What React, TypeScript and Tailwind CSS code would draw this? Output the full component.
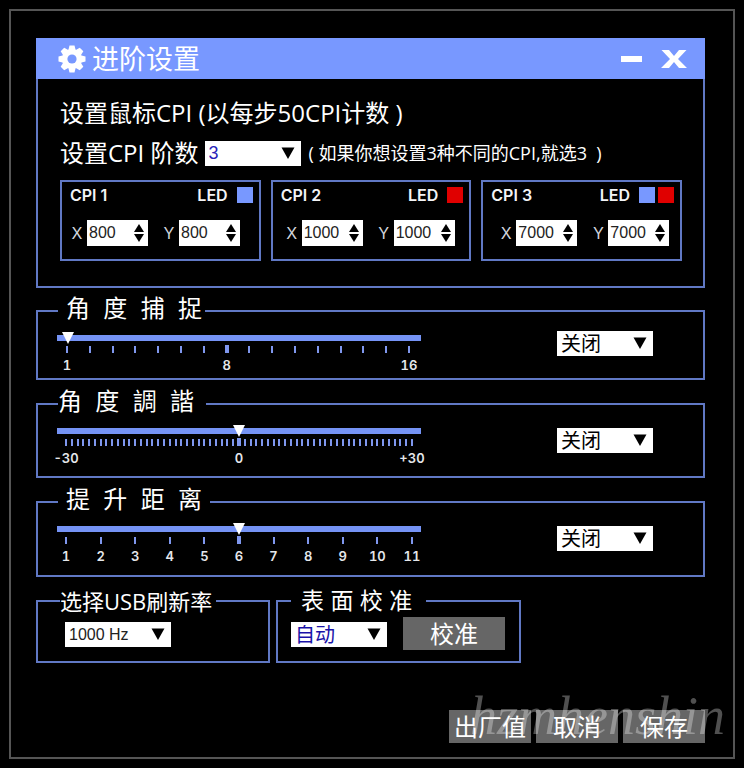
import { useState } from "react";
import { clsx } from "clsx";

const LATIN_UI = "font-['Inter','Noto_Sans_CJK_SC',sans-serif]";
const FIELD = "font-['Liberation_Sans','Noto_Sans_CJK_SC',sans-serif]";

const cpiStages = [
  { id: 1, leds: ["blue"], value: 800, pad: "pl-[9px]" },
  { id: 2, leds: ["red"], value: 1000, pad: "pl-[13px]" },
  { id: 3, leds: ["blue", "red"], value: 7000, pad: "pl-[17px]" },
];

type DropdownProps = {
  label: string;
  options: string[];
  className?: string;
};

function Dropdown({ label, options, className }: DropdownProps) {
  return (
    <div className={clsx("relative h-[25px] shrink-0 bg-white", className)}>
      <select
        aria-label={label}
        className={clsx(FIELD, "block h-full w-full appearance-none bg-transparent pl-1 leading-none outline-none")}
      >
        {options.map((option) => (
          <option key={option}>{option}</option>
        ))}
      </select>
      <svg viewBox="0 0 14 12" className="pointer-events-none absolute top-1.5 right-1.5 h-3 w-3.5">
        <path d="M0.5 0.5h13L7 12z" fill="#000" />
      </svg>
    </div>
  );
}

function AxisInput({ axis, stage, initial }: { axis: string; stage: number; initial: number }) {
  const [value, setValue] = useState(initial);
  const id = `cpi-${stage}-${axis}`;

  return (
    <div className="flex items-center gap-1">
      <label htmlFor={id} className={clsx(LATIN_UI, "w-3 text-center text-base text-gray-300")}>
        {axis}
      </label>
      <div className="flex h-[26px] w-[61px] items-center bg-white pr-1">
        <input
          id={id}
          type="text"
          inputMode="numeric"
          value={value}
          onChange={(e) => setValue(Number(e.target.value) || 0)}
          className={clsx(FIELD, "w-full min-w-0 flex-1 bg-transparent pl-0.5 text-base leading-none text-[#222] outline-none")}
        />
        <div className="flex flex-col gap-0.5">
          <button type="button" aria-label="+50" onClick={() => setValue(value + 50)}>
            <svg viewBox="0 0 10 8" className="block h-2 w-2.5">
              <path d="M5 0l5 8H0z" fill="#000" />
            </svg>
          </button>
          <button type="button" aria-label="-50" onClick={() => setValue(Math.max(50, value - 50))}>
            <svg viewBox="0 0 10 8" className="block h-2 w-2.5">
              <path d="M5 8l5-8H0z" fill="#000" />
            </svg>
          </button>
        </div>
      </div>
    </div>
  );
}

type SliderPanelProps = {
  title: string;
  legendClass: string;
  min: number;
  max: number;
  initial: number;
  major: number;
  labels: Record<number, string>;
  scaleClass: string;
  bodyClass: string;
  dropdownClass: string;
};

function SliderPanel(props: SliderPanelProps) {
  const { title, legendClass, min, max, initial, major, labels, scaleClass, bodyClass, dropdownClass } = props;
  const [value, setValue] = useState(initial);
  const ticks = Array.from({ length: max - min + 1 }, (_, i) => min + i);

  return (
    <fieldset className="border-2 border-[#6078c4]">
      <legend className={clsx(FIELD, "ml-5 pb-1 text-2xl leading-6 whitespace-pre", legendClass)}>{title}</legend>
      <div className={clsx("flex items-start justify-between pr-[50px] pl-[19px]", bodyClass)}>
        <div className="w-[364px] pt-2.5">
          <input
            type="range"
            aria-label={title}
            min={min}
            max={max}
            value={value}
            onChange={(e) => setValue(Number(e.target.value))}
            className="block h-1.5 w-full appearance-none bg-[#7593f5] px-[5px] outline-none [&::-webkit-slider-thumb]:h-3 [&::-webkit-slider-thumb]:w-3 [&::-webkit-slider-thumb]:appearance-none [&::-webkit-slider-thumb]:bg-white [&::-webkit-slider-thumb]:[clip-path:polygon(0_0,100%_0,50%_100%)]"
          />
          <div className={clsx("mt-1 flex h-[29px] justify-between", scaleClass)}>
            {ticks.map((tick) => (
              <div key={tick} className="flex w-0 flex-col items-center">
                <span className={clsx("shrink-0 bg-[#7f97ee]", tick === major ? "h-2 w-1" : "mt-px h-[7px] w-0.5")} />
                {labels[tick] && (
                  <span className={clsx(LATIN_UI, "mt-1 text-[13px] leading-4 font-semibold whitespace-nowrap text-gray-200 tabular-nums")}>
                    {labels[tick]}
                  </span>
                )}
              </div>
            ))}
          </div>
        </div>
        <Dropdown label={title} options={["关闭", "开启"]} className={clsx("w-24 text-xl text-black", dropdownClass)} />
      </div>
    </fieldset>
  );
}

export default function App() {
  const liftLabels = Object.fromEntries(Array.from({ length: 11 }, (_, i) => [i + 1, `${i + 1}`]));

  return (
    <div className="min-h-screen bg-black p-[9px] font-['Open_Sans','Noto_Sans_CJK_SC',sans-serif] text-white">
      <main className="border-2 border-[#555] pt-[27px] pr-7 pb-3.5 pl-[25px]">
        <section className="border-2 border-t-0 border-[#6078c4]">
          <header className="-mx-0.5 flex h-[41px] items-center bg-[#7898ff] pr-[18px] pl-[22px]">
            <svg viewBox="0 0 28 28" className="h-7 w-7">
              <g fill="#fff">
                {[0, 45, 90, 135].map((angle) => (
                  <path key={angle} d="M11.5 0.5h5l1.5 6v15l-1.5 6h-5l-1.5-6v-15z" transform={`rotate(${angle} 14 14)`} />
                ))}
                <circle cx="14" cy="14" r="10" />
              </g>
              <circle cx="14" cy="14" r="4.6" fill="#7898ff" />
            </svg>
            <h1 className="ml-1.5 text-[27px] leading-8">进阶设置</h1>
            <div className="ml-auto flex items-center gap-[19px]">
              <button type="button" aria-label="最小化">
                <svg viewBox="0 0 21 20" className="block h-5 w-[21px]">
                  <path d="M0 7h21v6H0z" fill="#fff" />
                </svg>
              </button>
              <button type="button" aria-label="关闭">
                <svg viewBox="0 0 26 20" className="block h-5 w-[26px]">
                  <path d="M0.5 1h7.5L13 7l5-6h7.500L17 10l9 9h-8L13 13l-5 6H0L9 10z" fill="#fff" />
                </svg>
              </button>
            </div>
          </header>

          <div className="pt-[18px] pr-[21px] pb-[25px] pl-[22px]">
            <h2 className="text-2xl leading-8">设置鼠标CPI (以每步50CPI计数 )</h2>
            <div className="mt-2 flex h-8 items-center">
              <span className="text-2xl leading-8">设置CPI 阶数</span>
              <Dropdown label="设置CPI 阶数" options={["3", "1", "2"]} className="ml-1.5 w-24 text-lg text-[#2a1fb8]" />
              <span className="ml-2 text-lg leading-6 whitespace-pre">( 如果你想设置3种不同的CPI,就选3  )</span>
            </div>

            <div className="mt-[11px] grid grid-cols-3 gap-2.5">
              {cpiStages.map((stage) => (
                <div key={stage.id} className="border-2 border-[#6078c4] pt-[5px] pb-[13px]">
                  <div className={clsx(LATIN_UI, "flex h-4 items-center pr-1.5 pl-2 text-base leading-4 font-semibold text-gray-100")}>
                    <span>CPI {stage.id}</span>
                    <span className="ml-auto">LED</span>
                    <div className="ml-[9px] flex gap-[3px]">
                      {stage.leds.map((led) => (
                        <span key={led} className={clsx("h-4 w-4", led === "blue" ? "bg-[#7898ff]" : "bg-[#e00000]")} />
                      ))}
                    </div>
                  </div>
                  <div className={clsx("mt-[17px] flex gap-[15px]", stage.pad)}>
                    <AxisInput axis="X" stage={stage.id} initial={stage.value} />
                    <AxisInput axis="Y" stage={stage.id} initial={stage.value} />
                  </div>
                </div>
              ))}
            </div>
          </div>
        </section>

        <div className="mt-[9px] flex flex-col gap-2.5">
          <SliderPanel
            title="角  度  捕  捉"
            legendClass="pl-2 pr-[3px]"
            min={1}
            max={16}
            initial={1}
            major={8}
            labels={{ 1: "1", 8: "8", 16: "16" }}
            scaleClass="pl-2.5 pr-3"
            bodyClass="pb-1"
            dropdownClass="mt-1.5"
          />
          <SliderPanel
            title="角  度  調  諧"
            legendClass="pr-3"
            min={-30}
            max={30}
            initial={0}
            major={0}
            labels={{ [-30]: "-30", 0: "0", 30: "+30" }}
            scaleClass="px-[9px]"
            bodyClass="pb-[9px]"
            dropdownClass="mt-2.5"
          />
          <SliderPanel
            title="提  升  距  离"
            legendClass="px-2"
            min={1}
            max={11}
            initial={6}
            major={6}
            labels={liftLabels}
            scaleClass="px-[9px]"
            bodyClass="pb-2.5"
            dropdownClass="mt-2.5"
          />
        </div>

        <div className="mt-3 flex gap-1.5">
          <fieldset className="w-[234px] border-2 border-[#6078c4]">
            <legend className="ml-[22px] pr-1 text-[22px] leading-6">选择USB刷新率</legend>
            <div className="pt-[9px] pb-3.5 pl-[27px]">
              <Dropdown label="选择USB刷新率" options={["1000 Hz", "500 Hz", "250 Hz", "125 Hz"]} className="w-[106px] text-base text-[#222]" />
            </div>
          </fieldset>
          <fieldset className="w-[245px] border-2 border-[#6078c4]">
            <legend className={clsx(FIELD, "ml-[13px] pr-3.5 pl-2.5 text-[23px] leading-6")}>表 面 校 准</legend>
            <div className="flex items-start gap-4 pt-1 pb-[11px] pl-[13px]">
              <Dropdown label="表面校准" options={["自动", "手动"]} className="mt-[5px] w-24 text-xl text-[#1a12a8]" />
              <button type="button" className="h-[33px] w-[102px] bg-[#666] text-2xl leading-8">
                校准
              </button>
            </div>
          </fieldset>
        </div>

        <footer className="relative mt-[47px] flex justify-end gap-[5px]">
          <span className="pointer-events-none absolute -right-5 bottom-0 font-['Liberation_Serif',serif] text-[54px] leading-none text-[#505050] italic">
            hzmhenshin
          </span>
          {/* translucent so the signature shows through the button faces */}
          {["出厂值", "取消", "保存"].map((action) => (
            <button key={action} type="button" className="relative h-[33px] w-[82px] bg-white/40 text-2xl leading-8 whitespace-nowrap">
              {action}
            </button>
          ))}
        </footer>
      </main>
    </div>
  );
}
